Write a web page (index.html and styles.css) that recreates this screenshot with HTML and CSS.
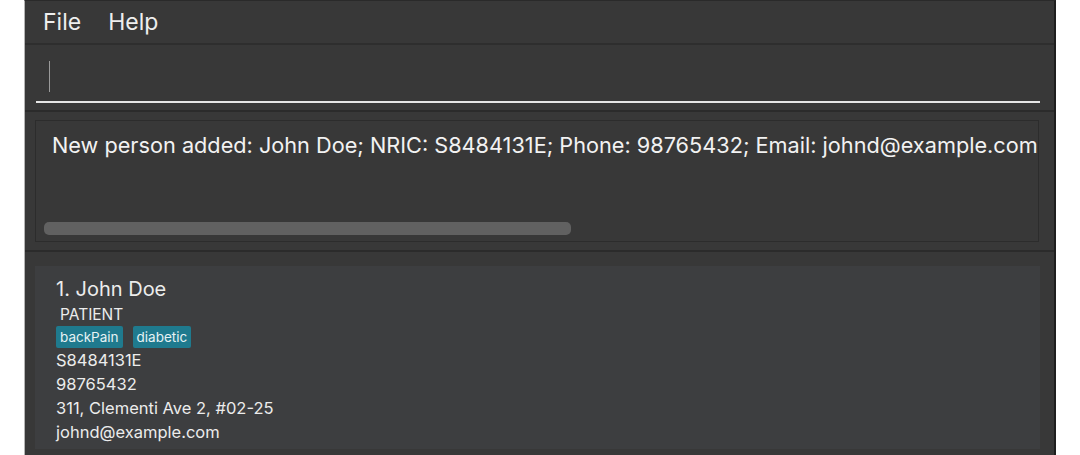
FILE: index.html
```html
<!DOCTYPE html>
<html>
<head>
<meta charset="utf-8">
<link rel="stylesheet" href="styles.css">
</head>
<body>
<div class="window">
  <div class="menubar">
    <span class="menu-item">File</span>
    <span class="menu-item">Help</span>
  </div>
  <div class="command-section">
    <div class="command-box"><span class="caret"></span></div>
  </div>
  <div class="result-section">
    <div class="result-box">
      <div class="result-text">New person added: John Doe; NRIC: S8484131E; Phone: 98765432; Email: johnd@example.com</div>
      <div class="hscroll"></div>
    </div>
  </div>
  <div class="list-section">
    <div class="card">
      <div class="name">1. John Doe</div>
      <div class="role">PATIENT</div>
      <div class="tags"><span class="tag">backPain</span><span class="tag">diabetic</span></div>
      <div class="field">S8484131E</div>
      <div class="field">98765432</div>
      <div class="field">311, Clementi Ave 2, #02-25</div>
      <div class="field">johnd@example.com</div>
    </div>
  </div>
</div>
</body>
</html>
```
FILE: styles.css
```css
html, body {
  margin: 0;
  padding: 0;
  background: #ffffff;
  height: 455px;
  overflow: hidden;
}
body {
  font-family: "Inter", "Liberation Sans", Arial, sans-serif;
  color: #ffffff;
}
.window {
  margin-left: 24px;
  width: 1029px;
  height: 455px;
  background: #383838;
  border-left: 1px solid #b5b5b5;
  border-right: 2px solid #1e1e1e;
  border-top: 1px solid #2a2a2a;
  display: flex;
  flex-direction: column;
  box-sizing: content-box;
}
.menubar {
  height: 42px;
  border-bottom: 2px solid #2e2e2e;
  display: flex;
  align-items: center;
  padding-left: 18px;
  gap: 27px;
  box-sizing: content-box;
}
.menu-item {
  font-size: 23px;
  color: #eeeeee;
  margin-top: -1px;
}
.command-section {
  height: 65px;
  border-bottom: 2px solid #2b2b2b;
  padding: 0 14px 0 11px;
}
.command-box {
  margin-top: 16px;
  height: 40px;
  border-bottom: 2px solid #e6e6e6;
  padding-left: 13px;
}
.caret {
  display: block;
  width: 1px;
  height: 31px;
  margin-top: 1px;
  background: #9a9a9a;
}
.result-section {
  height: 140px;
  border-bottom: 2px solid #2b2b2b;
  padding: 8px 15px 0 10px;
  box-sizing: border-box;
}
.result-box {
  height: 122px;
  border: 1px solid #2c2c2c;
  box-sizing: border-box;
  position: relative;
  padding: 11px 0 0 16px;
}
.result-text {
  font-size: 21.7px;
  line-height: 26px;
  white-space: nowrap;
  color: #f2f2f2;
}
.hscroll {
  position: absolute;
  left: 8px;
  top: 101px;
  width: 527px;
  height: 13px;
  border-radius: 5px;
  background: #616161;
}
.list-section {
  flex: 1;
  padding: 14px 14px 0 10px;
}
.card {
  background: #3d3e40;
  height: 183px;
  padding: 11px 0 0 21px;
  box-sizing: border-box;
  color: #ececec;
}
.name {
  font-size: 20px;
  line-height: 24px;
}
.role {
  font-size: 15.5px;
  line-height: 20px;
  margin-left: 4px;
  margin-top: 4px;
}
.tags {
  display: flex;
  gap: 10px;
  margin-top: 1px;
}
.tag {
  background: #1f7a8e;
  font-size: 13.5px;
  line-height: 18px;
  padding: 2px 4px;
  border-radius: 2px;
  color: #e6f2f4;
}
.field {
  font-size: 16.5px;
  line-height: 24px;
}
```
